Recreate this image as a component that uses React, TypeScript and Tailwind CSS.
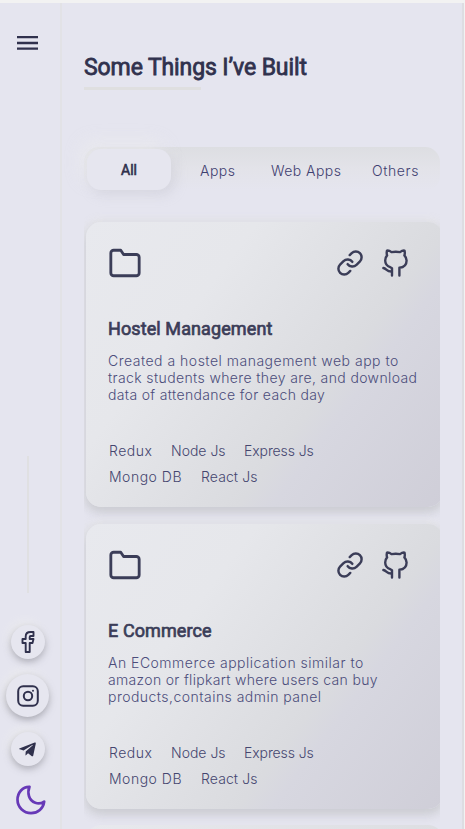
import React from "react";
import { FiLink, FiFolder } from "react-icons/fi";
import { FaTelegramPlane } from "react-icons/fa";

type Line = { text: string; tracking: string };
type Project = { title: string; titleTracking: string; lines: Line[] };

const projects: Project[] = [
  {
    title: "Hostel Management",
    titleTracking: "tracking-[0.1px]",
    lines: [
      { text: "Created a hostel management web app to", tracking: "tracking-[0.5px]" },
      { text: "track students where they are, and download", tracking: "tracking-[0.38px]" },
      { text: "data of attendance for each day", tracking: "tracking-[0.34px]" },
    ],
  },
  {
    title: "E Commerce",
    titleTracking: "tracking-[0.1px]",
    lines: [
      { text: "An ECommerce application similar to", tracking: "tracking-[0.49px]" },
      { text: "amazon or flipkart where users can buy", tracking: "tracking-[0.32px]" },
      { text: "products,contains admin panel", tracking: "tracking-[0.47px]" },
    ],
  },
];

const GithubCat = () => (
  <svg width="27" height="28" viewBox="0 0 27 28" fill="none" stroke="currentColor" strokeWidth="2.400" strokeLinecap="round" strokeLinejoin="round">
    <path d="M10 26.500V19.300C9.700 18.700 9.300 18.600 8.200 18.200C4.900 17 3.200 14.800 3.200 11.500C3.200 9.300 3.900 7.700 5.100 6.400C4.500 4.800 4.600 3.200 5 1.600C6.800 1.300 8.300 2.200 9.500 3.100C12.500 2.700 15.100 2.700 18 3.100C19.200 2.200 20.700 1.300 22.500 1.600C22.900 3.200 23 4.800 22.400 6.400C23.600 7.700 24.600 9.300 24.600 11.500C24.600 15.500 22.300 18.300 17.400 18.800V26.500" />
    <path d="M1.400 19C4.600 19.600 4.600 22.800 9.700 22.500" />
  </svg>
);

const Card = ({ project }: { project: Project }) => (
  <article className="h-[285px] w-[357px] shrink-0 rounded-[15px] bg-[linear-gradient(127deg,#e8e9ee_0%,#e6e7eb_30%,#dadbdf_64%,#d7d7e0_70%,#cfced8_100%)] pl-[22px] pt-[24px] text-[#3b3d58] shadow-[0_5px_10px_1px_rgba(150,152,160,0.32),0_0_6px_4px_rgba(229,230,234,0.9)]">
    <div className="flex items-center">
      <FiFolder className="h-[34px] w-[34px]" strokeWidth={2} />
      <FiLink className="ml-[194px] h-[28px] w-[28px]" strokeWidth={2.1} />
      <span className="ml-[18px]"><GithubCat /></span>
    </div>
    <h2 className={`mt-[38px] h-[21px] text-[18px] leading-[21px] [-webkit-text-stroke:0.7px_currentColor] ${project.titleTracking}`}>{project.title}</h2>
    <div className="mt-[13px] font-[Inter] text-[14px] font-light leading-[17.2px] text-[#4c4d7b]">
      {project.lines.map((l) => (
        <p key={l.text} className={`whitespace-nowrap ${l.tracking}`}>{l.text}</p>
      ))}
    </div>
    <div className="mt-[36.400px] flex flex-col gap-[4px] pl-px font-[Inter] text-[14px] font-light leading-[22px] text-[#45466f]">
      <div className="flex">
        <span className="w-[62px] tracking-[0.5px]">Redux</span>
        <span className="w-[73px]">Node Js</span>
        <span className="tracking-[-0.1px]">Express Js</span>
      </div>
      <div className="flex">
        <span className="w-[92px] tracking-[0.5px]">Mongo DB</span>
        <span className="tracking-[0.1px]">React Js</span>
      </div>
    </div>
  </article>
);

export default function App() {
  return (
    <div className="flex h-[829px] w-[465px] flex-col overflow-hidden bg-[#f2f2f2] pt-[3px] font-[Roboto] text-[#30314d]">
      <div className="mr-px flex min-h-0 flex-1 border-r-2 border-[#dddde2] bg-[#e5e5ef]">
        <aside className="flex w-[62px] shrink-0 flex-col items-center border-r-2 border-[#e2e2e6] pr-[5px]">
          <svg className="mt-[33px] shrink-0" width="21" height="14" viewBox="0 0 21 14" stroke="currentColor" strokeWidth="2.300">
            <path d="M0 1.200H21M0 7H21M0 12.700H21" />
          </svg>
          <div className="mt-[406px] h-[137px] w-[2px] bg-[#e0e0e2]" />
          <div className="mt-[32px] flex h-[34px] w-[34px] items-center justify-center rounded-full bg-[#e6e6ef] shadow-[0_3px_7px_rgba(120,120,130,0.5),-3px_-4px_10px_#ececef]">
            <svg width="14" height="22" viewBox="0 0 14 22" fill="none" stroke="currentColor" strokeWidth="1.900" strokeLinejoin="round">
              <path d="M12.500 1H9.500C6.500 1 4.700 2.700 4.700 5.500V8H1.500V12H4.700V21H8.700V12H11.500L12.500 8H8.700V6C8.700 5.300 9 5 9.700 5H12.500Z" />
            </svg>
          </div>
          <div className="mt-[15px] flex h-[43px] w-[43px] items-center justify-center rounded-full bg-[#e6e6ef] shadow-[0_3px_7px_rgba(120,120,130,0.55),-3px_-4px_10px_#ececef]">
            <svg width="22" height="22" viewBox="0 0 22 22" fill="none" stroke="currentColor" strokeWidth="2">
              <rect x="1.200" y="1.200" width="19.600" height="19.600" rx="5" />
              <circle cx="11" cy="11" r="4.200" />
              <circle cx="16" cy="5.700" r="1" fill="currentColor" stroke="none" />
            </svg>
          </div>
          <div className="mt-[15px] flex h-[34px] w-[34px] items-center justify-center rounded-full bg-[#e6e6ef] shadow-[0_3px_7px_rgba(120,120,130,0.5),-3px_-4px_10px_#ececef]">
            <FaTelegramPlane className="h-[19px] w-[19px]" />
          </div>
          <svg className="ml-[6px] mt-[19px] shrink-0" width="30" height="30" viewBox="0 0 30 30" fill="none" stroke="#6739b7" strokeWidth="2.700" strokeLinejoin="round">
            <path d="M13.500 1.800C6.800 1.500 1.500 7.600 1.500 14.800C1.500 22.300 7.600 28.200 15 28.200C22 28.200 27.200 23.600 28.200 16.500C25.800 18.300 22.600 18.900 19.300 17.800C12.800 15.500 11 7.900 13.500 1.800Z" />
          </svg>
        </aside>
        <main className="flex min-w-0 flex-1 flex-col pl-[22px] pr-[22px] pt-[51px]">
          <h1 className="h-[27px] whitespace-nowrap text-[23px] leading-[28px] tracking-[-0.1px] [-webkit-text-stroke:0.8px_currentColor]">Some Things I’ve Built</h1>
          <div className="mt-[6px] h-[3px] w-[117px] shrink-0 bg-[#dfdfe0]" />
          <nav className="mt-[57px] flex h-[44px] w-[356px] shrink-0 items-center rounded-[15px] bg-[linear-gradient(180deg,#dddee2_0%,#e3e3e9_50%,#e5e5ef_100%)] pl-[3px] font-[Inter] text-[14px] font-light text-[#3f4070]">
            <div className="flex h-[41px] w-[84px] items-center justify-center rounded-[14px] bg-[#e6e6ef] pt-[2px] font-[Roboto] font-normal text-[#30314d] shadow-[4px_5px_12px_rgba(190,190,200,0.35),-6px_-8px_16px_rgba(235,235,238,0.7)] [-webkit-text-stroke:0.6px_currentColor]">All</div>
            <span className="w-[71px] pl-[29px] pt-[2px] tracking-[0.5px]">Apps</span>
            <span className="w-[101px] whitespace-nowrap pl-[29px] pt-[2px] tracking-[0.45px]">Web Apps</span>
            <span className="pl-[29px] pt-[2px] tracking-[0.6px]">Others</span>
          </nav>
          <section className="mt-[20px] flex min-h-0 flex-1 flex-col gap-[16.5px] overflow-hidden pl-[2px] pt-[11px]">
            {projects.map((p) => <Card key={p.title} project={p} />)}
            <div className="h-[20px] w-[357px] shrink-0 rounded-t-[15px] bg-[linear-gradient(90deg,#e8e9ee,#dddee2)]" />
          </section>
        </main>
      </div>
    </div>
  );
}
